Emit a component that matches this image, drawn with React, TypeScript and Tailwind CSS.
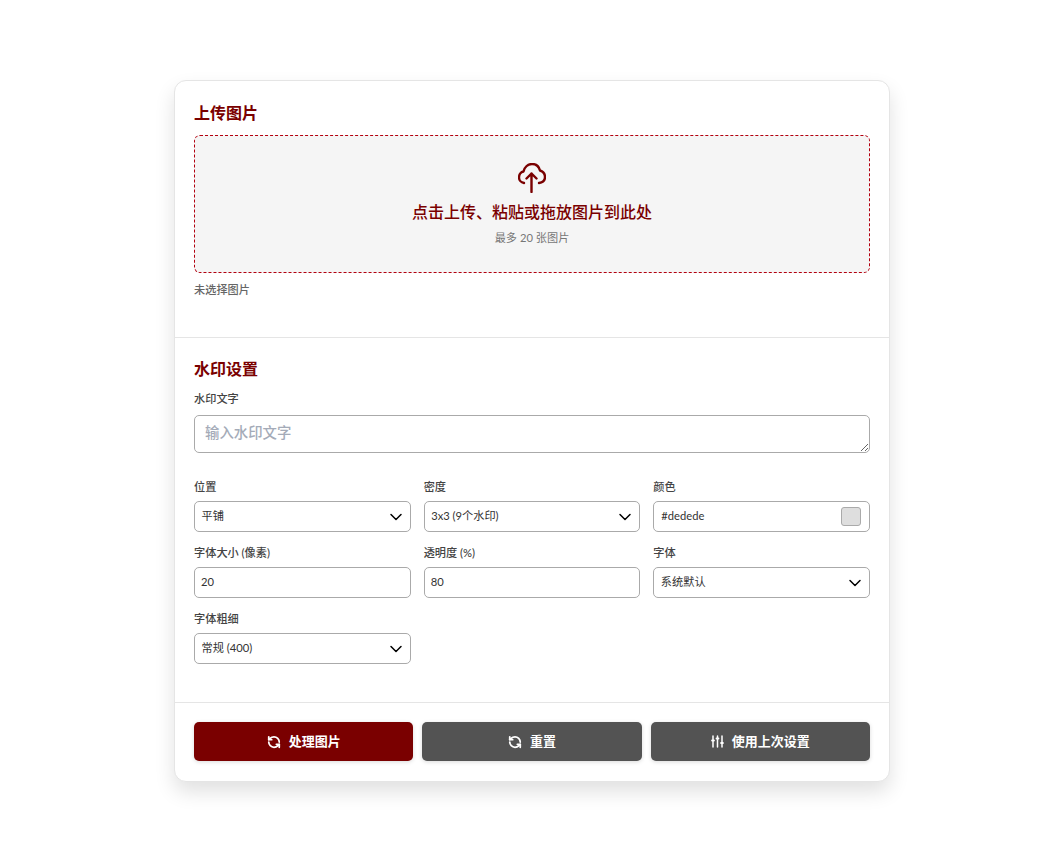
import React from 'react';
import { ChevronDown, RefreshCcw } from 'lucide-react';

const FONT = "font-['Lato','Noto_Sans_CJK_SC',sans-serif]";

const Label: React.FC<{ children: React.ReactNode; className?: string }> = ({ children, className }) => (
  <div className={`h-[16px] text-[11.2px] leading-[16px] font-medium text-[#444] ${className ?? 'mb-[6px]'}`}>{children}</div>
);

const SelectBox: React.FC<{ value: string }> = ({ value }) => (
  <div className="flex h-[31px] items-center justify-between rounded-[5px] border border-[#aaa] bg-white pl-[6.5px] pr-[4px] text-[11.2px] text-[#333]">
    <span>{value}</span>
    <ChevronDown size={20} strokeWidth={1.8} className="text-black" />
  </div>
);

const TextBox: React.FC<{ value: string }> = ({ value }) => (
  <div className="flex h-[31px] items-center rounded-[5px] border border-[#aaa] bg-white px-[6px] text-[11.2px] text-[#333]">
    {value}
  </div>
);

const Field: React.FC<{ label: string; children: React.ReactNode }> = ({ label, children }) => (
  <div>
    <Label>{label}</Label>
    {children}
  </div>
);

const ActionButton: React.FC<{ icon: React.ReactNode; label: string; primary?: boolean }> = ({ icon, label, primary }) => (
  <button
    className={`flex h-[39px] items-center justify-center gap-[8px] rounded-[5px] text-[13px] font-bold text-white shadow-[0_1px_4px_rgba(0,0,0,0.15)] ${
      primary ? 'bg-[#7a0000]' : 'bg-[#535353]'
    }`}
  >
    {icon}
    <span>{label}</span>
  </button>
);

const UploadIcon = () => (
  <svg width="28" height="30" viewBox="0 0 28 30" fill="none" stroke="#7a0000" strokeWidth="2.4" strokeLinecap="round" strokeLinejoin="round">
    <path d="M6 20C3 19.5 1 17 1 14.5C1 11.5 3 9 5.5 8.5C6.5 4 10 1 14 1C18 1 21 3.5 22 7.5C25 8.5 27 11 27 14C27 17 25 19.5 21 20" />
    <path d="M13.5 29V10.5M8.5 15.5L13.5 10.5L18.5 15.5" />
  </svg>
);

const SlidersIcon = () => (
  <svg width="13" height="13" viewBox="0 0 13 13" fill="none" stroke="currentColor" strokeLinecap="round">
    <path d="M2 1V12M6.5 1V12M11 1V12" strokeWidth="1.5" />
    <path d="M1.2 5.5H2.8M5.7 3.5H7.3M10.2 8H11.8" strokeWidth="2.2" />
  </svg>
);

export default function App() {
  return (
    <div className={`min-h-[849px] bg-white pt-[80px] pl-[174px] ${FONT}`}>
      <div className="w-[716px] rounded-[12px] border border-[#e5e5e5] bg-white shadow-[0_10px_20px_rgba(0,0,0,0.12)]">
        <section className="border-b border-[#e5e5e5] px-[19px] pt-[20px] pb-[39px]">
          <h2 className="mb-[10px] text-[16px] leading-[24px] font-bold text-[#7a0000]">上传图片</h2>
          <div className="flex h-[138px] flex-col items-center rounded-[6px] border border-dashed border-[#b3000f] bg-[#f5f5f5] pt-[27px]">
            <UploadIcon />
            <div className="mt-[7px] text-[16px] leading-[24px] font-medium text-[#7a0000]">点击上传、粘贴或拖放图片到此处</div>
            <div className="mt-[6px] text-[11.2px] leading-[16px] text-[#777]">最多 20 张图片</div>
          </div>
          <div className="mt-[9px] text-[11.2px] leading-[16px] font-medium text-[#666]">未选择图片</div>
        </section>

        <section className="border-b border-[#e5e5e5] px-[19px] pt-[19px] pb-[38px]">
          <h2 className="mb-[10px] text-[16px] leading-[24px] font-bold text-[#7a0000]">水印设置</h2>
          <Label className="mb-[8px]">水印文字</Label>
          <textarea
            placeholder="输入水印文字"
            className="mb-[26px] block h-[38px] w-full rounded-[5px] border border-[#aaa] px-[10px] py-[6px] text-[14.4px] leading-[22px] font-medium outline-none placeholder:text-[#a4abb8]"
          />
          <div className="grid grid-cols-3 gap-x-[13px] gap-y-[13px]">
            <Field label="位置"><SelectBox value="平铺" /></Field>
            <Field label="密度"><SelectBox value="3x3 (9个水印)" /></Field>
            <Field label="颜色">
              <div className="flex h-[31px] items-center justify-between rounded-[5px] border border-[#aaa] bg-white pl-[7px] pr-[8px] text-[11.2px] text-[#333]">
                <span>#dedede</span>
                <span className="h-[19px] w-[20px] rounded-[3px] border border-[#aaa] bg-[#dedede]" />
              </div>
            </Field>
            <Field label="字体大小 (像素)"><TextBox value="20" /></Field>
            <Field label="透明度 (%)"><TextBox value="80" /></Field>
            <Field label="字体"><SelectBox value="系统默认" /></Field>
            <Field label="字体粗细"><SelectBox value="常规 (400)" /></Field>
          </div>
        </section>

        <section className="grid grid-cols-3 gap-[9px] px-[19px] pt-[19px] pb-[20px]">
          <ActionButton primary label="处理图片" icon={<RefreshCcw size={14} strokeWidth={3} />} />
          <ActionButton label="重置" icon={<RefreshCcw size={14} strokeWidth={3} />} />
          <ActionButton label="使用上次设置" icon={<SlidersIcon />} />
        </section>
      </div>
    </div>
  );
}
